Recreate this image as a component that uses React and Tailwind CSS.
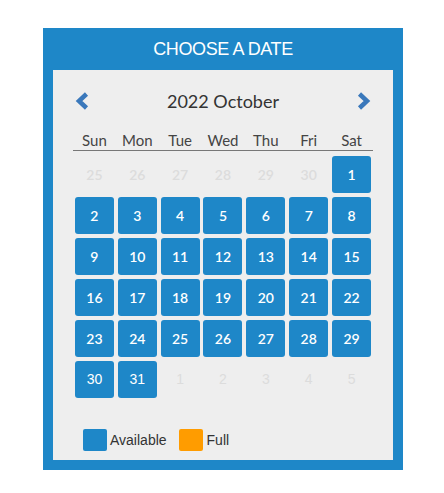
const BLUE = 'bg-[#1e87c8]';

const WEEKDAYS = ['Sun', 'Mon', 'Tue', 'Wed', 'Thu', 'Fri', 'Sat'];

const buildDays = () => {
  const days = [];
  [25, 26, 27, 28, 29, 30].forEach((d) => days.push({ d, inMonth: false }));
  for (let d = 1; d <= 31; d++) days.push({ d, inMonth: true });
  [1, 2, 3, 4, 5].forEach((d) => days.push({ d, inMonth: false }));
  return days;
};

function Chevron({ dir }) {
  const d = dir === 'left' ? 'M11.5 2 L4 9 L11.5 16' : 'M2.5 2 L10 9 L2.5 16';
  return (
    <svg width="14" height="18" viewBox="0 0 14 18">
      <path d={d} fill="none" stroke="#3a78bb" strokeWidth="4.5" />
    </svg>
  );
}

export default function App() {
  const days = buildDays();

  return (
    <div className="min-h-[493px] bg-white pt-[28px] pl-[43px]">
      <div className={`w-[360px] ${BLUE} px-[10px] pb-[10px]`}>
        {/* CABECERA */}
        <div className="h-[42px] flex items-center justify-center text-white text-[18px] tracking-[-0.4px] font-['Liberation_Sans',Arial,sans-serif]">
          CHOOSE A DATE
        </div>

        <div className="bg-[#eeeeee] px-[20px] pt-[20px] pb-[9px] font-['Lato',sans-serif]">
          {/* Navegación de mes */}
          <div className="h-[22px] flex items-center justify-between px-[2px]">
            <Chevron dir="left" />
            <span className="text-[18px] text-[#333] leading-none">2022 October</span>
            <Chevron dir="right" />
          </div>

          {/* Días de la semana */}
          <div className="mt-[18px] grid grid-cols-7 h-[20px] items-center">
            {WEEKDAYS.map((w) => (
              <div key={w} className="text-center text-[15px] text-[#444] leading-[20px]">
                {w}
              </div>
            ))}
          </div>
          <div className="h-px bg-[#777]" />

          {/* Cuadrícula de días */}
          <div className="mt-[5px] grid grid-cols-7 gap-y-[4px]">
            {days.map((item, i) => {
              const lastRow = i >= 35;
              const font = lastRow
                ? "font-['Liberation_Sans',Arial,sans-serif] font-normal"
                : 'font-semibold';
              return (
                <div key={i} className="flex justify-center">
                  {item.inMonth ? (
                    <div
                      className={`w-[39px] h-[37px] rounded-[3px] ${BLUE} text-white text-[14px] flex items-center justify-center ${font}`}
                    >
                      {item.d}
                    </div>
                  ) : (
                    <div
                      className={`w-[39px] h-[37px] text-[#dcdcdc] text-[14px] flex items-center justify-center ${font}`}
                    >
                      {item.d}
                    </div>
                  )}
                </div>
              );
            })}
          </div>

          {/* Leyenda */}
          <div className="mt-[31px] ml-[10px] flex items-center text-[14px] text-[#333] font-['Liberation_Sans',Arial,sans-serif]">
            <span className={`w-[24px] h-[22px] rounded-[2px] ${BLUE}`} />
            <span className="ml-[3px]">Available</span>
            <span className="ml-[12px] w-[24px] h-[22px] rounded-[2px] bg-[#ff9c00]" />
            <span className="ml-[4px]">Full</span>
          </div>
        </div>
      </div>
    </div>
  );
}
